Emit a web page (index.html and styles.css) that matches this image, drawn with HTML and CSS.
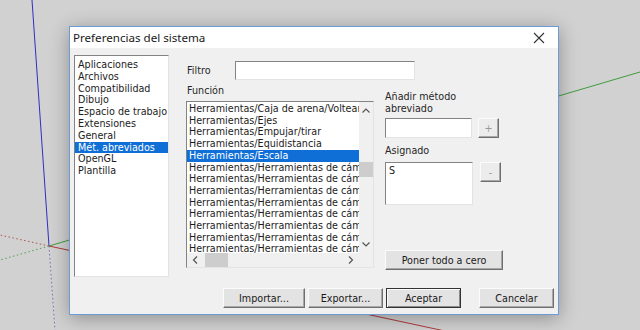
FILE: index.html
```html
<!DOCTYPE html>
<html lang="es">
<head>
<meta charset="utf-8">
<title>Preferencias del sistema</title>
<link rel="stylesheet" href="styles.css">
</head>
<body>
<svg class="scene" width="640" height="330" viewBox="0 0 640 330">
  <line x1="49" y1="246" x2="32" y2="0" stroke="#2f2fc4" stroke-width="1"/>
  <line x1="49" y1="246" x2="640" y2="72" stroke="#3f9c3f" stroke-width="1"/>
  <line x1="49" y1="246" x2="445" y2="331" stroke="#b03a3a" stroke-width="1"/>
  <line x1="49" y1="246" x2="0" y2="235" stroke="#b05050" stroke-width="1" stroke-dasharray="1.5 2.5"/>
  <line x1="49" y1="246" x2="0" y2="260" stroke="#50a050" stroke-width="1" stroke-dasharray="1.5 2.5"/>
  <line x1="49" y1="246" x2="55" y2="330" stroke="#7070c0" stroke-width="1" stroke-dasharray="1.5 2.5"/>
</svg>

<div class="dialog">
  <div class="titlebar">
    <span class="title">Preferencias del sistema</span>
    <svg class="close" width="12" height="12" viewBox="0 0 12 12"><path d="M1 1 L11 11 M11 1 L1 11" stroke="#333" stroke-width="1.1" fill="none"/></svg>
  </div>
  <div class="content">
    <div class="main">
      <ul class="cats sunken">
        <li>Aplicaciones</li>
        <li>Archivos</li>
        <li>Compatibilidad</li>
        <li>Dibujo</li>
        <li>Espacio de trabajo</li>
        <li>Extensiones</li>
        <li>General</li>
        <li class="sel">Mét. abreviados</li>
        <li>OpenGL</li>
        <li>Plantilla</li>
      </ul>

      <div class="mid">
        <div class="filter-row">
          <span class="lbl">Filtro</span>
          <div class="field filter sunken"></div>
        </div>
        <div class="lbl func-lbl">Función</div>
        <div class="funclist sunken">
          <ul class="items">
            <li>Herramientas/Caja de arena/Voltear arista</li>
            <li>Herramientas/Ejes</li>
            <li>Herramientas/Empujar/tirar</li>
            <li>Herramientas/Equidistancia</li>
            <li class="sel">Herramientas/Escala</li>
            <li>Herramientas/Herramientas de cámara</li>
            <li>Herramientas/Herramientas de cámara</li>
            <li>Herramientas/Herramientas de cámara</li>
            <li>Herramientas/Herramientas de cámara</li>
            <li>Herramientas/Herramientas de cámara</li>
            <li>Herramientas/Herramientas de cámara</li>
            <li>Herramientas/Herramientas de cámara</li>
            <li>Herramientas/Herramientas de cámara</li>
          </ul>
          <div class="vscroll">
            <svg class="arrow v" width="14" height="17" viewBox="0 0 14 17"><path d="M3.5 10.5 L7 7 L10.5 10.5" stroke="#555" stroke-width="1.2" fill="none"/></svg>
            <div class="vtrack"><div class="vthumb"></div></div>
            <svg class="arrow v" width="14" height="17" viewBox="0 0 14 17"><path d="M3.5 6.5 L7 10 L10.5 6.5" stroke="#555" stroke-width="1.2" fill="none"/></svg>
          </div>
          <div class="hscroll">
            <svg class="arrow h" width="17" height="14" viewBox="0 0 17 14"><path d="M10 3.5 L6.5 7 L10 10.5" stroke="#555" stroke-width="1.2" fill="none"/></svg>
            <div class="htrack"><div class="hthumb"></div></div>
            <svg class="arrow h" width="17" height="14" viewBox="0 0 17 14"><path d="M7 3.5 L10.5 7 L7 10.5" stroke="#555" stroke-width="1.2" fill="none"/></svg>
          </div>
          <div class="corner"></div>
        </div>
      </div>

      <div class="right">
        <div class="lbl add-lbl">Añadir método<br>abreviado</div>
        <div class="row add-row">
          <div class="field add-field sunken"></div>
          <div class="btn small disabled">+</div>
        </div>
        <div class="lbl asg-lbl">Asignado</div>
        <div class="row asg-row">
          <div class="field asg-field sunken">S</div>
          <div class="btn small disabled minus">-</div>
        </div>
        <div class="btn reset">Poner todo a cero</div>
      </div>
    </div>

    <div class="footer">
      <div class="btn imp">Importar...</div>
      <div class="btn exp">Exportar...</div>
      <div class="btn ok">Aceptar</div>
      <div class="btn cancel">Cancelar</div>
    </div>
  </div>
</div>
</body>
</html>
```

FILE: styles.css
```css
* { box-sizing: border-box; }
html, body { margin: 0; padding: 0; }
body {
  width: 640px;
  height: 330px;
  overflow: hidden;
  background: #d1d1d1;
  position: relative;
  font-family: "DejaVu Sans", Verdana, sans-serif;
  font-size: 9.6px;
  color: #1c1c1c;
}
.scene { position: absolute; left: 0; top: 0; }

.dialog {
  position: absolute;
  left: 69px;
  top: 26px;
  width: 490px;
  height: 289px;
  border: 1px solid #6c9bd6;
  background: #f0f0f0;
  box-shadow: 0 3px 18px rgba(0,0,0,0.32);
  display: flex;
  flex-direction: column;
}
.titlebar {
  height: 21px;
  background: #fff;
  display: flex;
  align-items: center;
  justify-content: space-between;
  padding: 0 13px 0 3px;
  flex: none;
}
.title {
  font-family: "Noto Sans", "Open Sans", sans-serif;
  font-size: 11.6px;
  color: #1a1a1a;
}
.close { display: block; }

.content {
  flex: 1;
  display: flex;
  flex-direction: column;
  padding: 7px 4px 0 4px;
}
.main {
  display: flex;
  align-items: flex-start;
}
ul { list-style: none; margin: 0; padding: 0; }

.sunken {
  border: 1px solid;
  border-color: #838383 #e3e3e3 #e3e3e3 #838383;
  background: #fff;
}

.cats {
  width: 95px;
  height: 222px;
  padding-top: 3px;
  line-height: 11.8px;
  flex: none;
}
.cats li { padding-left: 3px; white-space: nowrap; }
.sel { background: #0f6fd6; color: #fff; }

.mid {
  margin-left: 17px;
  width: 188px;
  flex: none;
}
.filter-row {
  display: flex;
  align-items: center;
  margin-top: 6px;
  width: 229px;
}
.lbl { color: #262626; }
.filter-row .lbl { margin-left: 1px; width: 48px; flex: none; }
.filter {
  width: 180px;
  height: 19px;
  flex: none;
}
.func-lbl { margin-top: 5px; margin-left: 1px; line-height: 12px; }

.funclist {
  margin-top: 4px;
  width: 188px;
  height: 167px;
  display: grid;
  grid-template-columns: minmax(0, 1fr) 14px;
  grid-template-rows: minmax(0, 1fr) 14px;
  overflow: hidden;
}
.items {
  overflow: hidden;
  padding-top: 1px;
  line-height: 11.7px;
  white-space: nowrap;
  min-width: 0;
}
.items li { padding-left: 2px; }
.vscroll {
  background: #f0f0f0;
  display: flex;
  flex-direction: column;
}
.arrow { display: block; flex: none; }
.vtrack { flex: 1; position: relative; }
.vthumb {
  position: absolute;
  left: 0;
  right: 0;
  top: 43px;
  height: 15px;
  background: #cdcdcd;
}
.hscroll {
  background: #f0f0f0;
  display: flex;
}
.htrack { flex: 1; position: relative; }
.hthumb {
  position: absolute;
  top: 0;
  bottom: 0;
  left: 1px;
  width: 23px;
  background: #cdcdcd;
}
.corner { background: #f0f0f0; }

.right {
  margin-left: 11px;
  display: flex;
  flex-direction: column;
  align-items: flex-start;
}
.add-lbl { margin-top: 36px; line-height: 12px; }
.row { display: flex; align-items: flex-start; }
.add-row { margin-top: 3px; }
.add-field { width: 87px; height: 20px; }
.small {
  width: 21px;
  height: 20px;
  margin-left: 6px;
}
.asg-lbl { margin-top: 7px; line-height: 12px; }
.asg-row { margin-top: 5px; }
.asg-field {
  width: 88px;
  height: 43px;
  padding: 2px 0 0 3px;
  line-height: 12px;
}
.minus { margin-left: 7px; }

.btn {
  display: flex;
  align-items: center;
  justify-content: center;
  background: #e3e3e3;
  border: 1px solid;
  border-color: #fbfbfb #6f6f6f #6f6f6f #fbfbfb;
  box-shadow: inset -1px -1px 0 #a8a8a8;
  color: #1a1a1a;
  height: 20px;
  white-space: nowrap;
}
.btn.disabled { color: #9a9a9a; background: #ececec; }
.reset { width: 118px; margin-top: 45px; }

.footer {
  display: flex;
  justify-content: flex-end;
  margin-top: 11px;
}
.footer .btn { width: 75px; }
.footer .imp { width: 82px; }
.footer .exp, .footer .ok { margin-left: 3px; }
.footer .cancel { margin-left: 18px; }
.ok {
  border-color: #333;
  box-shadow: inset 1px 1px 0 #fbfbfb, inset -1px -1px 0 #8a8a8a;
}
```
